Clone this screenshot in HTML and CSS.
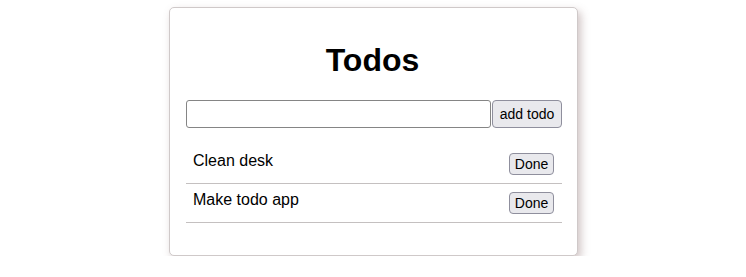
FILE: index.html
```
<!DOCTYPE html>
<html>
<head>
<meta charset="utf-8">
<link rel="stylesheet" href="styles.css">
</head>
<body>
<div class="card">
  <h1 class="title">Todos</h1>
  <form class="add-form" onsubmit="return false">
    <input class="add-input" type="text">
    <button class="btn add-btn" type="submit">add todo</button>
  </form>
  <ul class="todo-list">
    <li class="todo-item"><span class="todo-text">Clean desk</span><button class="btn done-btn">Done</button></li>
    <li class="todo-item"><span class="todo-text">Make todo app</span><button class="btn done-btn">Done</button></li>
  </ul>
</div>
</body>
</html>
```
FILE: styles.css
```
html, body {
  margin: 0;
  padding: 0;
  background: #ffffff;
}
body {
  font-family: "Liberation Sans", Arial, Helvetica, sans-serif;
  color: #000;
  padding-top: 7px;
}
.card {
  box-sizing: border-box;
  width: 409px;
  height: 249px;
  margin-left: 169px;
  border: 1px solid #cfc9c9;
  border-radius: 5px;
  box-shadow: 3px 4px 8px rgba(120, 85, 85, 0.35);
  padding: 0 15px 0 16px;
  background: #fff;
}
.title {
  margin: 0;
  padding-top: 34px;
  font-size: 32px;
  line-height: 37px;
  font-weight: bold;
  text-align: center;
  padding-right: 3px;
}
.add-form {
  display: flex;
  margin: 21px 0 0;
  gap: 1px;
}
.add-input {
  box-sizing: border-box;
  width: 305px;
  height: 28px;
  margin: 0;
  border: 1px solid #858585;
  border-radius: 3px;
  padding: 0 4px;
  font-size: 14px;
}
.btn {
  font-family: "Liberation Sans", Arial, Helvetica, sans-serif;
  font-size: 14px;
  color: #000;
  background: #e9e9ed;
  border: 1px solid #8f8f9d;
  border-radius: 4px;
  margin: 0;
  padding: 0 6px;
}
.add-btn {
  box-sizing: border-box;
  width: 70px;
  height: 28px;
}
.todo-list {
  list-style: none;
  margin: 17px 0 0;
  padding: 0;
  width: 376px;
}
.todo-item {
  box-sizing: border-box;
  height: 39px;
  border-bottom: 1px solid #c4c0c0;
  display: flex;
  justify-content: space-between;
  align-items: flex-start;
  padding: 7px 8px 0 7px;
}
.todo-text {
  font-size: 16px;
  line-height: 18px;
}
.done-btn {
  box-sizing: border-box;
  width: 45px;
  height: 22px;
  margin-top: 1px;
  padding: 0;
}
```
